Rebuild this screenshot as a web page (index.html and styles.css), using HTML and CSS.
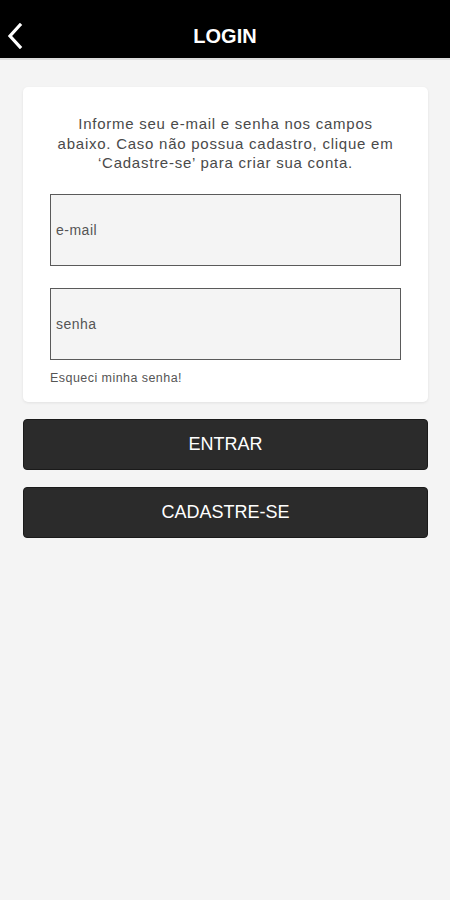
FILE: index.html
```html
<!DOCTYPE html>
<html lang="pt-BR">
<head>
    <meta charset="UTF-8">
    <meta name="viewport" content="width=device-width, initial-scale=1.0">
    <title>Login</title>
    <link rel="stylesheet" href="styles.css">
</head>
<body>
    <header class="topbar">
        <a class="back" href="#">
            <svg width="16" height="26" viewBox="0 0 16 26">
                <path d="M13 2 L3 13 L13 24" fill="none" stroke="#fff" stroke-width="3.2" stroke-linecap="square"/>
            </svg>
        </a>
        <h1 class="title">LOGIN</h1>
    </header>

    <main class="content">
        <form class="card">
            <p class="intro">Informe seu e-mail e senha nos campos<br>abaixo. Caso não possua cadastro, clique em<br>‘Cadastre-se’ para criar sua conta.</p>
            <input class="field" type="email" placeholder="e-mail">
            <input class="field" type="password" placeholder="senha">
            <a class="forgot" href="#">Esqueci minha senha!</a>
        </form>

        <button class="btn" type="button">ENTRAR</button>
        <button class="btn" type="button">CADASTRE-SE</button>
    </main>
</body>
</html>
```

FILE: styles.css
```css
body {
    margin: 0;
    font-family: "Liberation Sans", Arial, sans-serif;
    background-color: #f4f4f4;
    color: #444;
}
.topbar {
    height: 44px;
    padding-top: 14px;
    background-color: #000;
    border-bottom: 2px solid #dcdcdc;
    display: flex;
    align-items: center;
    justify-content: center;
    position: relative;
}
.back {
    position: absolute;
    left: 7px;
    top: 23px;
    display: block;
    line-height: 0;
}
.title {
    margin: 0;
    color: #fff;
    font-size: 20px;
    font-weight: 700;
}
.content {
    padding: 27px 22px 0 23px;
    display: flex;
    flex-direction: column;
    gap: 17px;
}
.card {
    background-color: #fff;
    border-radius: 5px;
    box-shadow: 0 1px 3px rgba(0, 0, 0, 0.08);
    padding: 27px 27px 17px 27px;
    display: flex;
    flex-direction: column;
}
.intro {
    margin: 0 0 21px 0;
    text-align: center;
    font-size: 15px;
    line-height: 19.5px;
    letter-spacing: 0.75px;
    color: #4a4a4a;
}
.field {
    height: 72px;
    box-sizing: border-box;
    border: 1.5px solid #5a5a5a;
    background-color: #f4f4f4;
    padding: 0 5px;
    font-family: "Liberation Sans", Arial, sans-serif;
    font-size: 14px;
    letter-spacing: 0.5px;
    color: #333;
    margin-bottom: 22px;
    border-radius: 0;
    outline: none;
}
.field + .field {
    margin-bottom: 11px;
}
.field::placeholder {
    color: #555;
}
.forgot {
    font-size: 12.5px;
    letter-spacing: 0.45px;
    color: #555;
    text-decoration: none;
}
.btn {
    height: 51px;
    border: 1px solid #1a1a1a;
    border-radius: 4px;
    background-color: #2b2b2b;
    color: #fff;
    font-family: "Liberation Sans", Arial, sans-serif;
    font-size: 18px;
    cursor: pointer;
}
```
